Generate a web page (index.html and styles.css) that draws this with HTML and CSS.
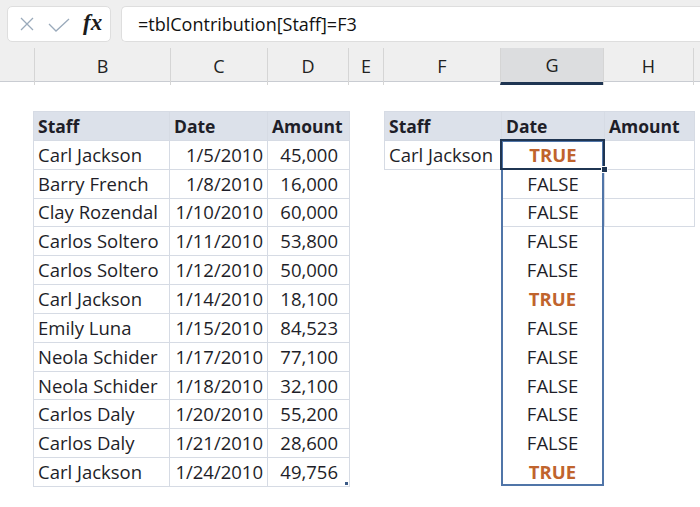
FILE: index.html
```html
<!DOCTYPE html>
<html>
<head>
<meta charset="utf-8">
<link rel="stylesheet" href="styles.css">
</head>
<body>
<div class="topbar">
  <div class="iconbox">
    <svg class="ic-x" width="14" height="14" viewBox="0 0 14 14"><path d="M1 1 L13 13 M13 1 L1 13" stroke="#9aaabb" stroke-width="1.3" fill="none"/></svg>
    <svg class="ic-check" width="22" height="14" viewBox="0 0 22 14"><path d="M1 6 L8 13 L21 1" stroke="#9aaabb" stroke-width="1.3" fill="none"/></svg>
    <span class="fx">fx</span>
  </div>
  <div class="formula">=tblContribution[Staff]=F3</div>
</div>
<div class="colheads">
  <div class="ch a"></div>
  <div class="ch">B</div>
  <div class="ch">C</div>
  <div class="ch">D</div>
  <div class="ch">E</div>
  <div class="ch">F</div>
  <div class="ch sel">G</div>
  <div class="ch">H</div>
  <div class="ch last"></div>
</div>
<div class="sheet">
  <table class="tbl left">
    <tr class="hd"><th class="c1">Staff</th><th class="c2">Date</th><th class="c3">Amount</th></tr>
    <tr><td>Carl Jackson</td><td class="r">1/5/2010</td><td class="n">45,000</td></tr>
    <tr><td>Barry French</td><td class="r">1/8/2010</td><td class="n">16,000</td></tr>
    <tr><td>Clay Rozendal</td><td class="r">1/10/2010</td><td class="n">60,000</td></tr>
    <tr><td>Carlos Soltero</td><td class="r">1/11/2010</td><td class="n">53,800</td></tr>
    <tr><td>Carlos Soltero</td><td class="r">1/12/2010</td><td class="n">50,000</td></tr>
    <tr><td>Carl Jackson</td><td class="r">1/14/2010</td><td class="n">18,100</td></tr>
    <tr><td>Emily Luna</td><td class="r">1/15/2010</td><td class="n">84,523</td></tr>
    <tr><td>Neola Schider</td><td class="r">1/17/2010</td><td class="n">77,100</td></tr>
    <tr><td>Neola Schider</td><td class="r">1/18/2010</td><td class="n">32,100</td></tr>
    <tr><td>Carlos Daly</td><td class="r">1/20/2010</td><td class="n">55,200</td></tr>
    <tr><td>Carlos Daly</td><td class="r">1/21/2010</td><td class="n">28,600</td></tr>
    <tr><td>Carl Jackson</td><td class="r">1/24/2010</td><td class="n">49,756<span class="resize"></span></td></tr>
  </table>
  <div class="right">
    <table class="tbl crit">
      <tr class="hd"><th class="f">Staff</th><th class="g">Date</th><th class="h">Amount</th></tr>
      <tr><td>Carl Jackson</td><td class="b t">TRUE</td><td></td></tr>
      <tr class="nof"><td class="blank"></td><td class="b">FALSE</td><td></td></tr>
      <tr class="nof"><td class="blank"></td><td class="b">FALSE</td><td></td></tr>
    </table>
    <div class="spillrest">
      <div class="sc">FALSE</div>
      <div class="sc">FALSE</div>
      <div class="sc t">TRUE</div>
      <div class="sc">FALSE</div>
      <div class="sc">FALSE</div>
      <div class="sc">FALSE</div>
      <div class="sc">FALSE</div>
      <div class="sc">FALSE</div>
      <div class="sc t">TRUE</div>
    </div>
    <div class="spill"></div>
    <div class="active"><span class="handle"></span></div>
  </div>
</div>
</body>
</html>
```
FILE: styles.css
```css
* { box-sizing: border-box; }
html, body { margin: 0; padding: 0; background: #fff; }
body {
  width: 700px; height: 507px; overflow: hidden;
  font-family: "Open Sans", "Noto Sans", sans-serif;
  color: #1e1e28;
}
.topbar {
  height: 48px; background: #efefef;
  display: flex; align-items: flex-start; padding: 6px 0 0 7px; gap: 10px;
}
.iconbox {
  width: 104px; height: 36px; background: #fff;
  border: 1px solid #dedede; border-radius: 5px;
  display: flex; align-items: center; padding-left: 12px;
}
.ic-x { margin-right: 14px; }
.ic-check { margin-right: 13px; margin-top: 1px; }
.fx {
  font-family: "Liberation Serif", serif; font-style: italic; font-weight: bold;
  font-size: 23px; color: #1b1b1b; margin-top: -3px;
}
.formula {
  flex: 1; height: 36px; background: #fff;
  border: 1px solid #dedede; border-right: none; border-radius: 5px 0 0 5px;
  font-size: 18px; line-height: 34px; padding-left: 16px; color: #111;
}
.colheads {
  height: 34px; background: #efefef;
  display: grid;
  grid-template-columns: 34px 136px 97px 81px 35px 117px 103px 90px 7px;
  border-bottom: 1px solid #c9ccd2;
}
.ch {
  font-size: 18px; text-align: center; line-height: 36px; color: #222;
  border-left: 1px solid #d5d5d5;
  background-clip: padding-box;
}
.ch.a { border-left: none; }
.ch.sel { background: #dcdddf; border-bottom: 3px solid #1f3552; line-height: 34px; }
.sheet {
  padding: 29px 0 0 33px;
  display: flex; gap: 34px; align-items: flex-start;
}
.tbl { border-collapse: collapse; font-size: 18.5px; }
.tbl th, .tbl td {
  height: 28.85px; padding: 0 4px; border: 1px solid #d6dbe4;
  white-space: nowrap; line-height: 20px;
}
.tbl th { background: #dce1ea; font-weight: bold; text-align: left; font-size: 17.5px; }
.left .c1 { width: 136px; }
.left .c2 { width: 98px; }
.left .c3 { width: 82px; }
.left td.r { text-align: right; }
.left td.n { text-align: right; padding-right: 11px; position: relative; }
.resize {
  position: absolute; right: 1px; bottom: 1px; width: 3px; height: 3px; background: #3b5a86;
}
.right { position: relative; }
.crit .f { width: 117px; }
.crit .g { width: 103px; }
.crit .h { width: 90px; }
.crit td.b { text-align: center; }
.t { color: #c0642d; font-weight: bold; }
.crit tr.nof td.blank { border: none; border-right: 1px solid #d6dbe4; }
.spillrest { margin-left: 117px; width: 103px; }
.sc { height: 28.85px; text-align: center; font-size: 18.5px; line-height: 28px; }
.spill {
  position: absolute; left: 117px; top: 28.85px; width: 103px; height: 346px;
  border: 2px solid #5075a8;
}
.active {
  position: absolute; left: 116px; top: 28px; width: 105px; height: 31px;
  border: 2px solid #1f3552;
}
.handle {
  position: absolute; right: -5px; bottom: -5px; width: 7px; height: 7px;
  background: #1f3552; border: 1px solid #fff;
}
```
